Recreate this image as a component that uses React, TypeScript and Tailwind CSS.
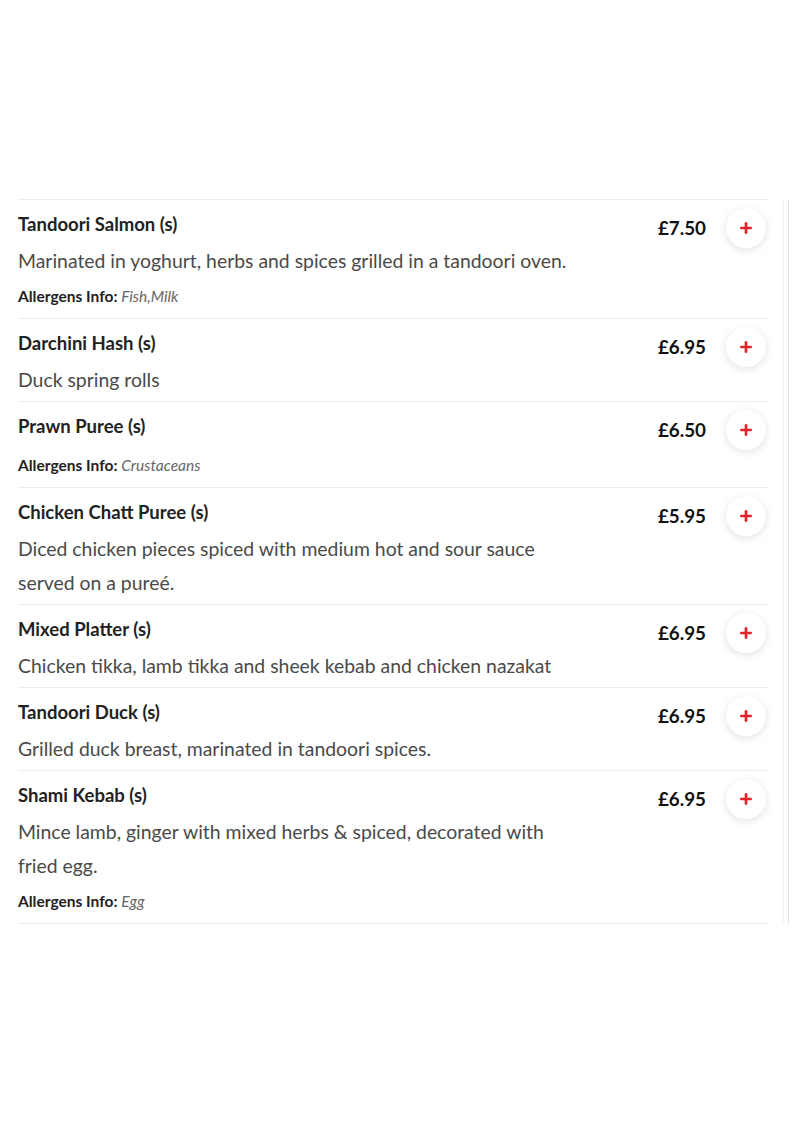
import { Plus } from 'lucide-react';

type Dish = {
    name: string;
    price: string;
    desc?: string[];
    allergens?: string;
};

const dishes: Dish[] = [
    {
        name: 'Tandoori Salmon (s)',
        price: '£7.50',
        desc: ['Marinated in yoghurt, herbs and spices grilled in a tandoori oven.'],
        allergens: 'Fish,Milk',
    },
    { name: 'Darchini Hash (s)', price: '£6.95', desc: ['Duck spring rolls'] },
    { name: 'Prawn Puree (s)', price: '£6.50', allergens: 'Crustaceans' },
    {
        name: 'Chicken Chatt Puree (s)',
        price: '£5.95',
        desc: ['Diced chicken pieces spiced with medium hot and sour sauce', 'served on a pureé.'],
    },
    {
        name: 'Mixed Platter (s)',
        price: '£6.95',
        desc: ['Chicken tikka, lamb tikka and sheek kebab and chicken nazakat'],
    },
    {
        name: 'Tandoori Duck (s)',
        price: '£6.95',
        desc: ['Grilled duck breast, marinated in tandoori spices.'],
    },
    {
        name: 'Shami Kebab (s)',
        price: '£6.95',
        desc: ['Mince lamb, ginger with mixed herbs & spiced, decorated with', 'fried egg.'],
        allergens: 'Egg',
    },
];

function DishRow({ dish }: { dish: Dish }) {
    return (
        <div className="flex border-b border-[#ececec] pt-[14px]">
            <div className={`flex-1 ${dish.allergens ? 'pb-[12px]' : 'pb-[4px]'}`}>
                <div className="text-[18.5px] leading-[20px] font-bold text-[#222]">{dish.name}</div>
                {dish.desc && (
                    <div className="mt-[10px] text-[19.4px] leading-[34px] text-[#4a4a4a]">
                        {dish.desc.map((line) => (
                            <div key={line}>{line}</div>
                        ))}
                    </div>
                )}
                {dish.allergens && (
                    <div
                        className={`${dish.desc ? 'mt-[8px]' : 'mt-[19px]'} text-[15.5px] leading-[20px] text-[#222]`}
                    >
                        <span className="font-bold">Allergens Info: </span>
                        <span className="italic text-[#666]">{dish.allergens}</span>
                    </div>
                )}
            </div>
            <div className="flex items-center gap-[20px] self-start -mt-[6px]">
                <span className="text-[18.8px] font-bold text-[#111]">{dish.price}</span>
                <button className="w-[40px] h-[40px] rounded-full bg-white shadow-[0_2px_8px_rgba(0,0,0,0.12)] flex items-center justify-center mr-[2px]">
                    <Plus className="w-[16px] h-[16px] text-[#e3242b]" strokeWidth={4} />
                </button>
            </div>
        </div>
    );
}

export default function App() {
    return (
        <div className="min-h-[1122px] bg-white" style={{ fontFamily: 'Lato, "Noto Sans", sans-serif' }}>
            <div className="flex pt-[199px]">
                <div className="ml-[18px] w-[750px] border-t border-[#ececec]">
                    {dishes.map((d) => (
                        <DishRow key={d.name} dish={d} />
                    ))}
                </div>
                <div className="ml-[15px] w-px bg-[#f3f3f3]" />
                <div className="ml-[4px] w-px bg-[#e2e2e2]" />
            </div>
        </div>
    );
}
